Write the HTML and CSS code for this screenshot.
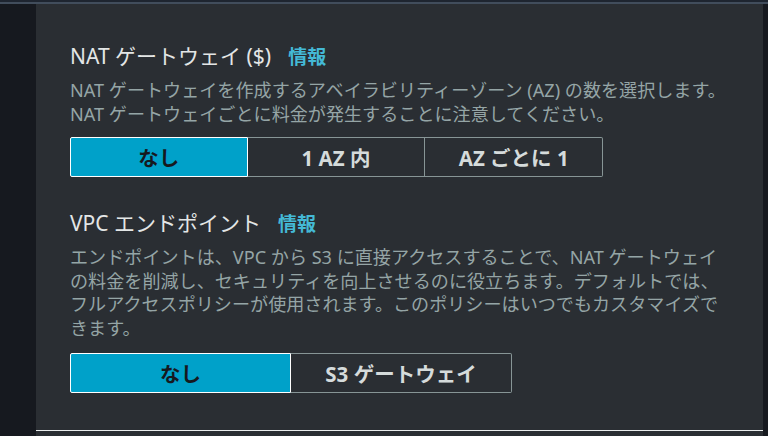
FILE: index.html
```html
<!DOCTYPE html>
<html lang="ja">
<head>
<meta charset="utf-8">
<title>VPC 設定</title>
<link rel="stylesheet" href="styles.css">
</head>
<body>
<div class="topbar"></div>
<div class="layout">
  <div class="side"></div>
  <main class="panel">
    <section class="field">
      <div class="label-row">
        <h2 class="label">NAT ゲートウェイ ($)</h2>
        <a class="info" href="#">情報</a>
      </div>
      <p class="desc">NAT ゲートウェイを作成するアベイラビリティーゾーン (AZ) の数を選択します。NAT ゲートウェイごとに料金が発生することに注意してください。</p>
      <div class="segmented seg-3">
        <button class="seg selected">なし</button>
        <button class="seg">1 AZ 内</button>
        <button class="seg">AZ ごとに 1</button>
      </div>
    </section>
    <section class="field field-2">
      <div class="label-row">
        <h2 class="label">VPC エンドポイント</h2>
        <a class="info" href="#">情報</a>
      </div>
      <p class="desc">エンドポイントは、VPC から S3 に直接アクセスすることで、NAT ゲートウェイの料金を削減し、セキュリティを向上させるのに役立ちます。デフォルトでは、フルアクセスポリシーが使用されます。このポリシーはいつでもカスタマイズできます。</p>
      <div class="segmented seg-2">
        <button class="seg selected">なし</button>
        <button class="seg">S3 ゲートウェイ</button>
      </div>
    </section>
    <div class="divider"></div>
  </main>
  <div class="scroll"></div>
</div>
</body>
</html>
```
FILE: styles.css
```css
* { box-sizing: border-box; }
html, body {
  margin: 0;
  padding: 0;
  height: 436px;
  overflow: hidden;
  background: #16191f;
  font-family: "Noto Sans", "Noto Sans CJK JP", sans-serif;
}
.topbar {
  height: 4px;
  background: #1e2530;
  border-bottom: 2px solid #414d5c;
}
.layout {
  display: flex;
  height: 432px;
}
.side {
  width: 36px;
  flex: none;
  background: #16191f;
}
.scroll {
  width: 5px;
  flex: none;
  background: #16191f;
}
.panel {
  flex: 1;
  background: #2a2e33;
  padding: 38px 34px 0 34px;
  display: flex;
  flex-direction: column;
}
.label-row {
  display: flex;
  align-items: baseline;
  height: 28px;
}
.label {
  margin: 0;
  font-size: 21px;
  line-height: 28px;
  font-weight: 400;
  color: #e3e6e6;
}
.info {
  margin-left: 17px;
  font-size: 19px;
  font-weight: 700;
  color: #44b9d6;
  text-decoration: none;
}
.desc {
  margin: 9px 0 0 0;
  width: 656px;
  font-size: 18.1px;
  line-height: 23.5px;
  color: #95a5a6;
}
.segmented {
  margin-top: 11px;
  display: grid;
  height: 40px;
  justify-content: start;
}
.seg-3 { grid-template-columns: repeat(3, 177.7px); }
.seg-2 { grid-template-columns: repeat(2, 221px); margin-top: 13px; }
.seg {
  font-family: inherit;
  font-size: 20.5px;
  font-weight: 700;
  color: #d5dbdb;
  background: transparent;
  border: 1px solid #879596;
  border-left: none;
  padding: 0;
  margin: 0;
}
.seg:first-child { border-left: 1px solid #879596; border-radius: 2px 0 0 2px; }
.seg:last-child { border-radius: 0 2px 2px 0; }
.seg.selected {
  background: #00a1c9;
  color: #16191f;
  border: 1px solid #ffffff;
}
.field-2 { margin-top: 32px; }
.divider {
  margin: 37px -34px 0 -34px;
  border-top: 1px solid #eaeded;
}
```
